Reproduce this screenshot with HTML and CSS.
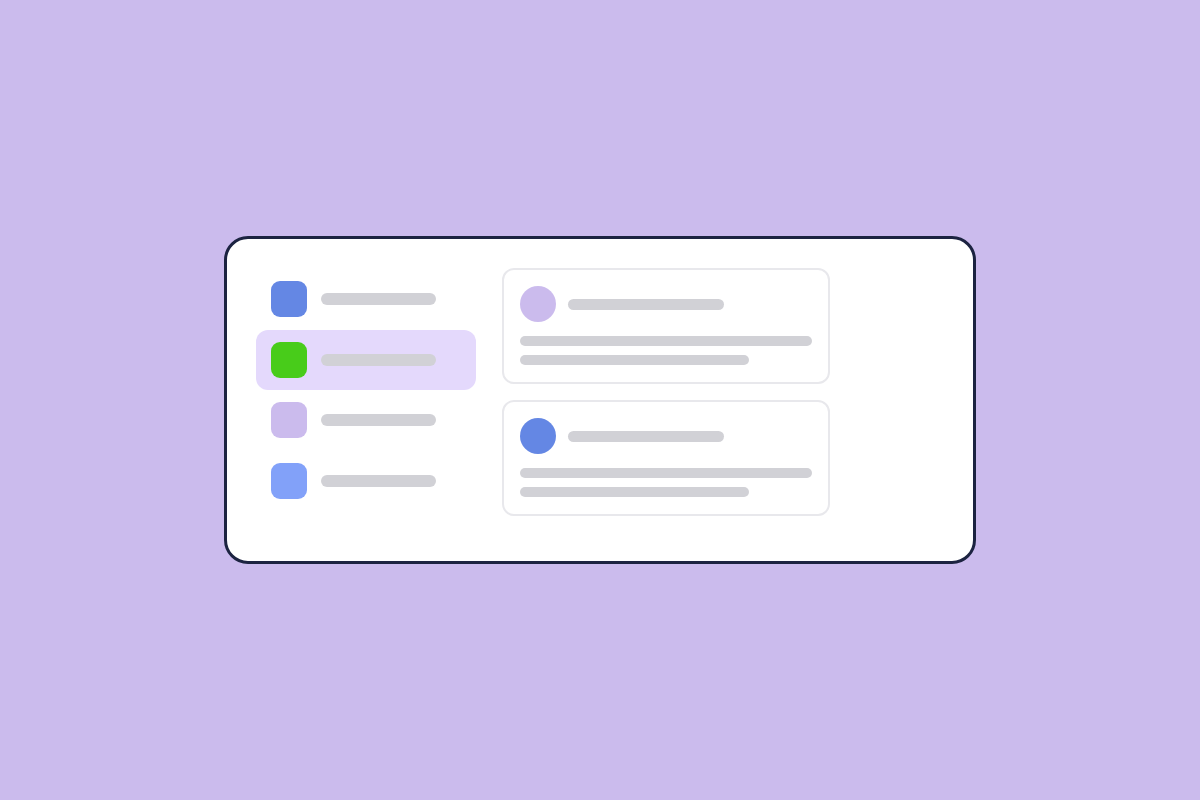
FILE: index.html
```html
<!DOCTYPE html>
<html lang="en">
<head>
<meta charset="utf-8">
<title>Layout preview</title>
<link rel="stylesheet" href="styles.css">
</head>
<body>
<main class="stage">
  <section class="window">
    <nav class="sidebar">
      <div class="nav-item">
        <span class="nav-icon icon-blue"></span>
        <span class="nav-bar"></span>
      </div>
      <div class="nav-item active">
        <span class="nav-icon icon-green"></span>
        <span class="nav-bar"></span>
      </div>
      <div class="nav-item">
        <span class="nav-icon icon-lavender"></span>
        <span class="nav-bar"></span>
      </div>
      <div class="nav-item">
        <span class="nav-icon icon-sky"></span>
        <span class="nav-bar"></span>
      </div>
    </nav>
    <div class="feed">
      <article class="post">
        <div class="post-head">
          <span class="avatar avatar-lavender"></span>
          <span class="title-bar"></span>
        </div>
        <span class="line line-full"></span>
        <span class="line line-short"></span>
      </article>
      <article class="post">
        <div class="post-head">
          <span class="avatar avatar-blue"></span>
          <span class="title-bar"></span>
        </div>
        <span class="line line-full"></span>
        <span class="line line-short"></span>
      </article>
    </div>
  </section>
</main>
</body>
</html>
```
FILE: styles.css
```css
* { box-sizing: border-box; }
html, body {
  margin: 0;
  padding: 0;
  height: 100%;
}
body {
  background: #cbbbed;
  font-family: "Inter", "Liberation Sans", sans-serif;
}
.stage {
  width: 1200px;
  height: 800px;
  display: flex;
  align-items: center;
  justify-content: center;
}
.window {
  width: 752px;
  height: 328px;
  background: #ffffff;
  border: 3px solid #1c2341;
  border-radius: 24px;
  padding: 29px;
  display: flex;
  gap: 26px;
  align-items: flex-start;
}
.sidebar {
  width: 220px;
  display: flex;
  flex-direction: column;
  padding-top: 1px;
}
.nav-item {
  height: 60.5px;
  display: flex;
  align-items: center;
  gap: 14px;
  padding: 0 15px;
  border-radius: 12px;
}
.nav-item.active {
  background: #e4d9fc;
}
.nav-icon {
  width: 36px;
  height: 36px;
  border-radius: 9px;
  flex: none;
}
.icon-blue { background: #6487e4; }
.icon-green { background: #48cc1a; }
.icon-lavender { background: #cbbbed; }
.icon-sky { background: #82a1f9; }
.nav-bar {
  width: 115px;
  height: 12px;
  border-radius: 6px;
  background: #d1d1d6;
}
.feed {
  display: flex;
  flex-direction: column;
  gap: 16px;
}
.post {
  width: 328px;
  height: 116px;
  border: 2px solid #e8e8ec;
  border-radius: 12px;
  padding: 16px;
  display: flex;
  flex-direction: column;
}
.post-head {
  display: flex;
  align-items: center;
  gap: 12px;
  margin-bottom: 14px;
}
.avatar {
  width: 36px;
  height: 36px;
  border-radius: 50%;
  flex: none;
}
.avatar-lavender { background: #cbbbed; }
.avatar-blue { background: #6487e4; }
.title-bar {
  width: 156px;
  height: 11px;
  border-radius: 6px;
  background: #d1d1d6;
}
.line {
  display: block;
  height: 10px;
  border-radius: 5px;
  background: #d1d1d6;
}
.line-full { width: 292px; margin-bottom: 9px; }
.line-short { width: 229px; }
```
